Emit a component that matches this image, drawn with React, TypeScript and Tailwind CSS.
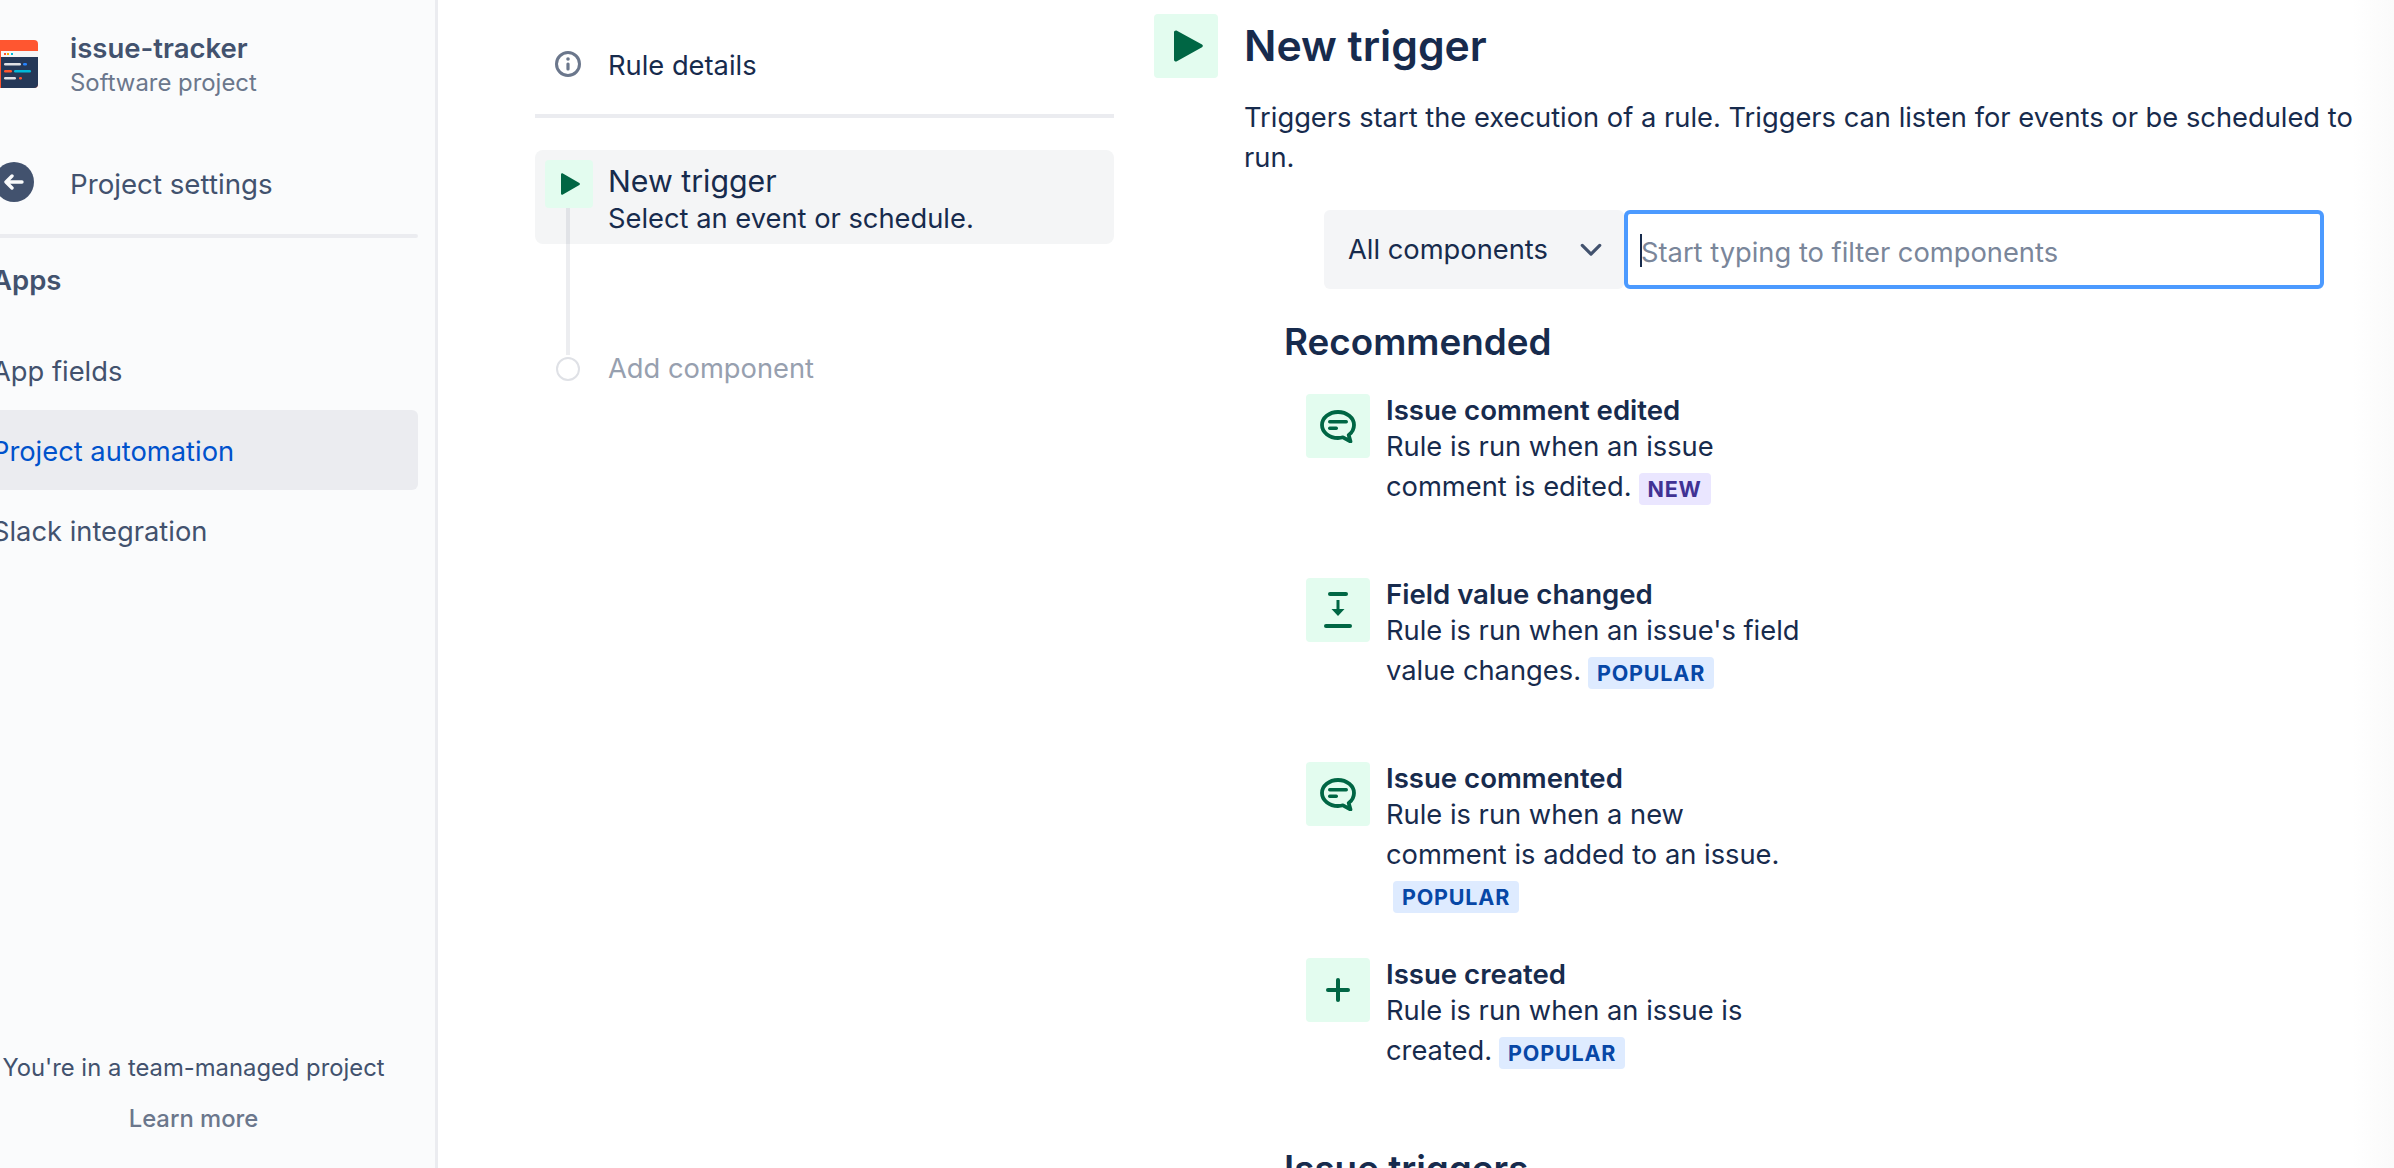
import type { JSX } from 'react';

const ink = 'text-[#172b4d]';

function PlayIcon({ className }: { className: string }): JSX.Element {
  return (
    <svg viewBox="1 0 18 22" preserveAspectRatio="none" className={className}>
      <path d="M1 1.600C1 .6 2 0 2.800.5l15.600 9.400c.7.500.7 1.500 0 2L2.800 21.500C2 22 1 21.400 1 20.400z" fill="#006644" />
    </svg>
  );
}

function CommentIcon(): JSX.Element {
  return (
    <svg viewBox="0 0 36 33" className="h-[33px] w-[36px]">
      <path
        d="M18 2C9.200 2 2 7.800 2 15s7.200 13 16 13c1.800 0 3.500-.2 5-.7l7.500 4.200-1.800-6.500c3.300-2.400 5.300-6 5.300-10C34 7.800 26.800 2 18 2z"
        fill="none"
        stroke="#006644"
        strokeWidth="3.800"
        strokeLinejoin="round"
      />
      <rect x="8" y="10" width="20" height="3.400" rx="1.700" fill="#006644" />
      <rect x="8" y="16.500" width="10" height="3.400" rx="1.700" fill="#006644" />
    </svg>
  );
}

function FieldIcon(): JSX.Element {
  return (
    <svg viewBox="0 0 28 36" className="h-[36px] w-[28px]">
      <rect x="4" y="0" width="20" height="4" rx="2" fill="#006644" />
      <path d="M12.500 8h3v9h5l-6.500 7-6.500-7h5z" fill="#006644" />
      <rect x="0" y="32" width="28" height="4" rx="2" fill="#006644" />
    </svg>
  );
}

function PlusIcon(): JSX.Element {
  return (
    <svg viewBox="0 0 24 24" className="h-[24px] w-[24px]">
      <rect x="10" y="0" width="4" height="24" rx="2" fill="#006644" />
      <rect x="0" y="10" width="24" height="4" rx="2" fill="#006644" />
    </svg>
  );
}

function ProjectLogo(): JSX.Element {
  return (
    <svg viewBox="0 0 48 48" className="h-[48px] w-[48px] shrink-0">
      <rect width="48" height="48" rx="4" fill="#ff5630" />
      <path d="M11 17h37v27a4 4 0 0 1-4 4H11z" fill="#253858" />
      <rect x="11" y="11" width="37" height="6" fill="#f4f5f7" />
      <rect x="14" y="13" width="2" height="2" fill="#ff5630" />
      <rect x="17" y="13" width="2" height="2" fill="#ffab00" />
      <rect x="21" y="13" width="2" height="2" fill="#00b8d9" />
      <rect x="14" y="23" width="17" height="2.500" rx="1.200" fill="#dfe1e6" />
      <rect x="33" y="23" width="4" height="2.500" rx="1.200" fill="#2684ff" />
      <rect x="14" y="30" width="8" height="2.500" rx="1.200" fill="#ff5630" />
      <rect x="24" y="30" width="17" height="2.500" rx="1.200" fill="#00b8d9" />
      <rect x="14" y="37" width="12" height="2.500" rx="1.200" fill="#dfe1e6" />
      <rect x="29" y="37" width="3" height="2.500" rx="1.200" fill="#ff5630" />
    </svg>
  );
}

function Lozenge({ label, tone }: { label: string; tone: 'new' | 'popular' }): JSX.Element {
  return (
    <span
      className={`ml-[7px] inline-block h-[32px] rounded-[4px] px-[9px] align-[-1px] text-[21.500px] leading-[32px] font-bold tracking-[0.800px] ${
        tone === 'new' ? 'bg-[#eae6ff] text-[#403294]' : 'bg-[#deebff] text-[#0747a6]'
      }`}
    >
      {label}
    </span>
  );
}

const components = [
  {
    title: 'Issue comment edited',
    text: 'Rule is run when an issue comment is edited.',
    tag: 'new' as const,
    icon: <CommentIcon />,
  },
  {
    title: 'Field value changed',
    text: "Rule is run when an issue's field value changes.",
    tag: 'popular' as const,
    icon: <FieldIcon />,
  },
  {
    title: 'Issue commented',
    text: 'Rule is run when a new comment is added to an issue.',
    tag: 'popular' as const,
    icon: <CommentIcon />,
  },
  {
    title: 'Issue created',
    text: 'Rule is run when an issue is created.',
    tag: 'popular' as const,
    icon: <PlusIcon />,
  },
];

export default function App(): JSX.Element {
  return (
    <div className="relative flex h-[1168px] w-[2394px] overflow-hidden bg-white font-['Inter',sans-serif] text-[27.300px]">
      <aside className="flex h-full w-[438px] shrink-0 flex-col overflow-hidden border-r-[3px] border-[#ebecf0] bg-[#fafbfc] text-[#42526e]">
        <div className="-ml-[10px] flex h-full flex-col pt-[40px] pr-[17px]">
          <div className="flex h-[48px] gap-[32px]">
            <ProjectLogo />
            <div>
              <div className="-mt-[8px] text-[27.500px] leading-[32px] font-semibold">issue-tracker</div>
              <div className="mt-[3px] text-[23.900px] leading-[32px] text-[#6b778c]">Software project</div>
            </div>
          </div>
          <div className="mt-[74px] flex h-[40px] items-center gap-[36px]">
            <div className="ml-[4px] flex h-[40px] w-[40px] items-center justify-center rounded-full bg-[#42526e]">
              <svg viewBox="0 0 20 16" className="h-[16px] w-[20px]">
                <path d="M8 2 2 8l6 6M3 8h15" fill="none" stroke="#fafbfc" strokeWidth="3.400" strokeLinecap="round" strokeLinejoin="round" />
              </svg>
            </div>
            <span className="mt-[5px] text-[27.700px]">Project settings</span>
          </div>
          <div className="mt-[32px] h-[4px] rounded-[2px] bg-[#ebecf0]" />
          <div className="mt-[22px] pl-[2px] text-[27.500px] leading-[40px] font-semibold">Apps</div>
          <div className="mt-[30px] flex flex-col">
            <div className="flex h-[80px] items-center pt-[5px] pl-[2px]">App fields</div>
            <div className="flex h-[80px] items-center rounded-[6px] bg-[#ebecf0] pt-[5px] pl-[2px] text-[#0052cc]">Project automation</div>
            <div className="flex h-[80px] items-center pt-[5px] pl-[2px]">Slack integration</div>
          </div>
          <div className="mt-auto mb-[33px] flex flex-col items-center pr-[21px] text-center">
            <div className="text-[23.800px] leading-[32px]">You're in a team-managed project</div>
            <div className="mt-[19px] text-[23.800px] leading-[32px] font-medium text-[#6b778c]">Learn more</div>
          </div>
        </div>
      </aside>

      <nav className={`ml-[97px] w-[579px] shrink-0 pt-[50px] ${ink}`}>
        <div className="flex h-[32px] items-center pl-[20px]">
          <svg viewBox="0 0 26 26" className="-mt-[4px] h-[26px] w-[26px]">
            <circle cx="13" cy="13" r="11.500" fill="none" stroke="#6b778c" strokeWidth="3" />
            <circle cx="13" cy="8" r="1.800" fill="#6b778c" />
            <rect x="11.400" y="11.500" width="3.200" height="8" rx="1.500" fill="#6b778c" />
          </svg>
          <span className="mt-[1px] ml-[27px]">Rule details</span>
        </div>
        <div className="mt-[32px] h-[4px] bg-[#ebecf0]" />
        <div className="relative mt-[32px]">
          <div className="flex h-[94px] rounded-[8px] bg-[#f4f5f6] pt-[10px] pl-[10px]">
            <div className="z-10 flex h-[48px] w-[48px] items-center justify-center rounded-[4px] bg-[#e3fcef]">
              <PlayIcon className="ml-[3px] h-[22px] w-[19px]" />
            </div>
            <div className="ml-[15px]">
              <div className="mt-[1px] text-[30.300px] leading-[40px]">New trigger</div>
              <div className="-mt-[2px] leading-[40px]">Select an event or schedule.</div>
            </div>
          </div>
          <div className="absolute top-[58px] left-[31px] h-[147px] w-[4px] bg-[#091e42]/8" />
          <div className="mt-[104px] flex items-center">
            <div className="ml-[21px] h-[24px] w-[24px] rounded-full border-2 border-[#dfe1e6] bg-white" />
            <span className="mt-[1px] ml-[28px] text-[#97a0af]">Add component</span>
          </div>
        </div>
      </nav>

      <main className={`ml-[40px] min-w-0 flex-1 pt-[14px] ${ink}`}>
        <div className="flex h-[64px] items-center gap-[26px]">
          <div className="flex h-[64px] w-[64px] shrink-0 items-center justify-center rounded-[4px] bg-[#e3fcef]">
            <PlayIcon className="ml-[5px] h-[32px] w-[29px]" />
          </div>
          <h1 className="text-[42.700px] leading-[56px] font-semibold">New trigger</h1>
        </div>
        <p className="mt-[20px] w-[1225px] pl-[90px] leading-[40px]">
          Triggers start the execution of a rule. Triggers can listen for events or be scheduled to run.
        </p>
        <div className="mt-[32px] ml-[170px] flex h-[79px]">
          <div className="flex w-[300px] items-center rounded-[6px] bg-[#f4f5f7] pt-[1px] pl-[24px]">
            <span className="mt-[1px] shrink-0">All components</span>
            <svg viewBox="0 0 24 16" className="ml-[32px] h-[15px] w-[22px] shrink-0">
              <path d="M2.500 2.500 12 12l9.500-9.500" fill="none" stroke="#42526e" strokeWidth="3.500" strokeLinecap="round" strokeLinejoin="round" />
            </svg>
          </div>
          <div className="relative w-[700px] rounded-[6px] border-[4px] border-[#4c9aff] bg-white">
            <input
              readOnly
              placeholder="Start typing to filter components"
              className="h-full w-full bg-transparent pt-[6px] pl-[13px] outline-none placeholder:text-[#7a869a]"
            />
            <div className="absolute top-[20px] left-[12px] h-[33px] w-[2px] bg-[#172b4d]" />
          </div>
        </div>
        <h2 className="mt-[29px] ml-[130px] text-[36.800px] leading-[48px] font-semibold">Recommended</h2>
        <div className="mt-[28px] ml-[152px] flex flex-col">
          {components.map((item) => (
            <div key={item.title} className="flex min-h-[184px] gap-[16px] pb-[43px]">
              <div className="flex h-[64px] w-[64px] shrink-0 items-center justify-center rounded-[4px] bg-[#e3fcef]">{item.icon}</div>
              <div className="w-[416px] leading-[40px]">
                <div className="text-[27.600px] leading-[32px] font-semibold">{item.title}</div>
                <div className="mt-[1px]">
                  {item.text}
                  <Lozenge label={item.tag === 'new' ? 'NEW' : 'POPULAR'} tone={item.tag} />
                </div>
              </div>
            </div>
          ))}
        </div>
        <h2 className="mt-[3px] ml-[130px] text-[36.800px] leading-[48px] font-semibold">Issue triggers</h2>
      </main>

      <div className="absolute top-0 right-0 bottom-0 w-[41px] bg-linear-to-r from-white to-[#fafafa]" />
    </div>
  );
}
